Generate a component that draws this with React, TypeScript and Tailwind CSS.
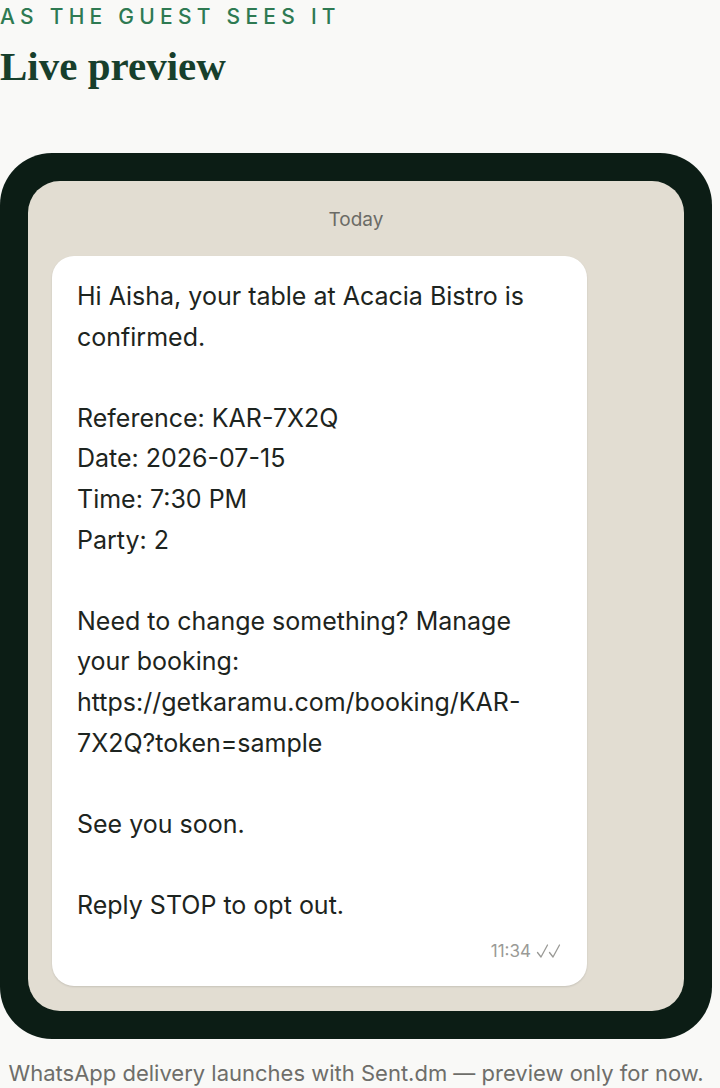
import React from 'react';

const MESSAGE = `Hi Aisha, your table at Acacia Bistro is confirmed.

Reference: KAR-7X2Q
Date: 2026-07-15
Time: 7:30 PM
Party: 2

Need to change something? Manage your booking: https://getkaramu.com/booking/KAR-7X2Q?token=sample

See you soon.

Reply STOP to opt out.`;

function DoubleCheck() {
  return (
    <svg width="26" height="16" viewBox="0 0 26 16" fill="none" stroke="currentColor" strokeWidth="1.3" strokeLinecap="round" strokeLinejoin="round">
      <path d="M1.5 9.5 L5 14 L11.5 2" />
      <path d="M13.5 9.5 L17 14 L23.5 2" />
    </svg>
  );
}

export default function App() {
  return (
    <div className="min-h-[1088px] w-[720px] bg-[#f9f9f7] font-['Inter',sans-serif]">
      <div className="w-[712px]">
        {/* Section header */}
        <div className="pt-[5px]">
          <span className="block text-[21px] leading-[24px] font-medium uppercase tracking-[0.25em] text-[#2e7a52]">
            As the guest sees it
          </span>
          <h2 className="mt-[14px] font-['Liberation_Serif',serif] text-[41px] leading-[46px] font-bold text-[#173f2c]">
            Live preview
          </h2>
        </div>

        {/* Phone frame */}
        <div className="mt-[64px] rounded-[52px] bg-[#0c1d15] p-[28px]">
          <div className="rounded-[32px] bg-[#e2ddd2] px-[24px] pt-[27px] pb-[25px]">
            <div className="text-center text-[19px] leading-[24px] text-[#6b6b66]">Today</div>

            <div className="mt-[24px] w-[535px] rounded-[22px] bg-white px-[25px] pt-[20px] pb-[24px] shadow-[0_1px_2px_rgba(0,0,0,0.12)]">
              <p className="whitespace-pre-wrap text-[25px] leading-[40.6px] text-[#1d2420]">{MESSAGE}</p>
              <div className="mt-[14px] flex items-center justify-end gap-[5px] text-[17px] leading-[22px] text-[#9a9a96]">
                <span>11:34</span>
                <DoubleCheck />
              </div>
            </div>
          </div>
        </div>

        <p className="mt-[19px] text-center text-[22px] leading-[30px] text-[#6e6e6a]">
          WhatsApp delivery launches with Sent.dm — preview only for now.
        </p>
      </div>
    </div>
  );
}
